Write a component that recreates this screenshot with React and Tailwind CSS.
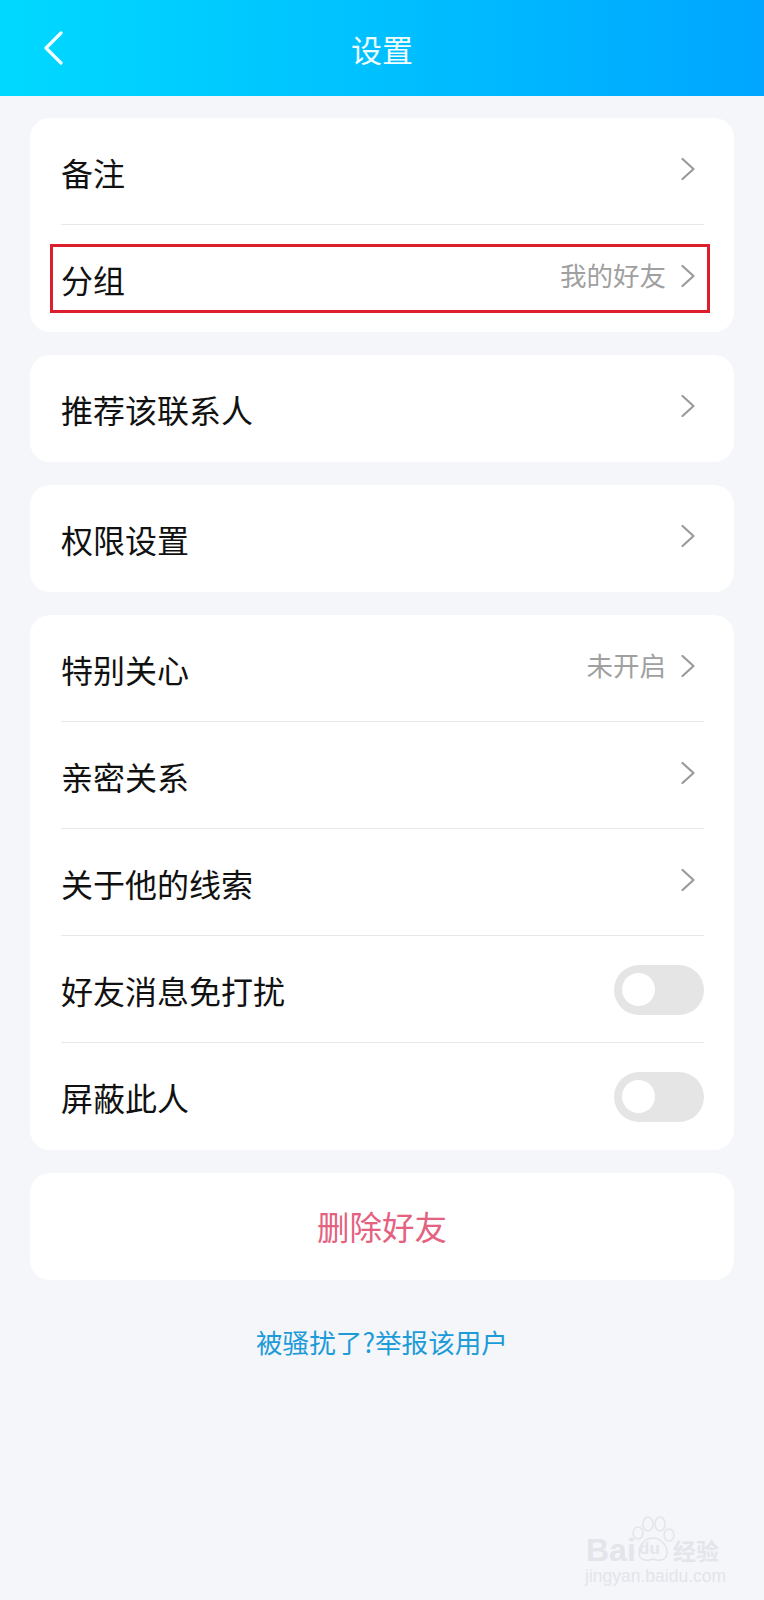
const CJK = { fontFamily: '"Noto Sans CJK SC", "Noto Sans", sans-serif' };

function Chevron() {
  return (
    <svg width="16" height="24" viewBox="0 0 16 24" fill="none" className="shrink-0">
      <path d="M2.5 2 L13.5 12 L2.5 22" stroke="#9a9a9a" strokeWidth="2.2" strokeLinecap="round" strokeLinejoin="round" />
    </svg>
  );
}

function Toggle() {
  return (
    <div className="flex h-[50px] w-[90px] items-center rounded-full bg-[#e5e5e5] pl-[8px]">
      <div className="h-[33px] w-[33px] rounded-full bg-white" />
    </div>
  );
}

function Row({ label, value, toggle, divider }) {
  return (
    <div className="relative flex h-[107px] items-center justify-between pl-[31px] pr-[30px]">
      <span className="text-[32px] leading-none text-[#111111]">{label}</span>
      {toggle ? (
        <Toggle />
      ) : (
        <div className="mb-[6px] flex items-center gap-[14px] pr-[8px]">
          {value && <span className="text-[26.5px] leading-none text-[#a0a0a0]">{value}</span>}
          <Chevron />
        </div>
      )}
      {divider && <div className="absolute bottom-0 left-[31px] right-[30px] h-px bg-[#e8e8e8]" />}
    </div>
  );
}

function Card({ children, className = "" }) {
  return <div className={"overflow-hidden rounded-[20px] bg-white " + className}>{children}</div>;
}

function Watermark() {
  return (
    <div className="absolute left-[585px] top-[1516px] h-[68px] w-[140px] text-[#e3e5ea]">
      <span className="absolute left-[1px] top-[18px] text-[32px] font-bold leading-[32px]" style={{ fontFamily: '"Liberation Sans", sans-serif' }}>Bai</span>
      <svg className="absolute left-[46px] top-0" width="44" height="48" viewBox="0 0 44 48" fill="none" stroke="#e3e5ea" strokeWidth="1.6">
        <ellipse cx="7" cy="17" rx="5" ry="6" />
        <ellipse cx="17" cy="8" rx="5" ry="7" />
        <ellipse cx="29" cy="8" rx="5" ry="7" />
        <ellipse cx="38" cy="19" rx="5" ry="6" />
        <path d="M22 22 C30 22 37 30 36 38 C35 45 27 45 22 43 C17 45 9 45 8 38 C7 30 14 22 22 22 Z" />
      </svg>
      <span className="absolute left-[54px] top-[24px] text-[17px] font-bold leading-[17px]" style={{ fontFamily: '"Liberation Sans", sans-serif' }}>du</span>
      <span className="absolute left-[88px] top-[23px] text-[23px] font-bold leading-[23px]" style={CJK}>经验</span>
      <span className="absolute left-0 top-[51px] text-[17.5px] leading-[18px]" style={{ fontFamily: '"Liberation Sans", sans-serif' }}>jingyan.baidu.com</span>
    </div>
  );
}

export default function App() {
  return (
    <div className="relative h-[1600px] w-[764px] overflow-hidden bg-[#f4f6fa]" style={CJK}>
      <header className="relative flex h-[96px] items-center justify-center bg-gradient-to-r from-[#00d9ff] to-[#00a6ff]">
        <svg className="absolute left-[42px] top-[31px]" width="22" height="34" viewBox="0 0 22 34" fill="none">
          <path d="M19 2 L4 17 L19 32" stroke="#f2fdff" strokeWidth="3.2" strokeLinecap="round" strokeLinejoin="round" />
        </svg>
        <span className="text-[31px] leading-none text-[#f2fdff]">设置</span>
      </header>

      <main className="flex flex-col gap-[23px] pl-[30px] pr-[30px] pt-[22px]">
        <Card>
          <Row label="备注" divider />
          <Row label="分组" value="我的好友" />
        </Card>
        <Card>
          <Row label="推荐该联系人" />
        </Card>
        <Card>
          <Row label="权限设置" />
        </Card>
        <Card>
          <Row label="特别关心" value="未开启" divider />
          <Row label="亲密关系" divider />
          <Row label="关于他的线索" divider />
          <Row label="好友消息免打扰" toggle divider />
          <Row label="屏蔽此人" toggle />
        </Card>
        <Card className="flex h-[107px] items-center justify-center">
          <span className="text-[32.5px] leading-none text-[#e4617f]">删除好友</span>
        </Card>
        <div className="mt-[19px] text-center text-[26.6px] leading-[40px] text-[#1d9bd8]">被骚扰了?举报该用户</div>
      </main>

      <div className="absolute left-[50px] top-[244px] h-[69px] w-[660px] border-[3px] border-[#dd1f2d]" />
      <Watermark />
    </div>
  );
}
